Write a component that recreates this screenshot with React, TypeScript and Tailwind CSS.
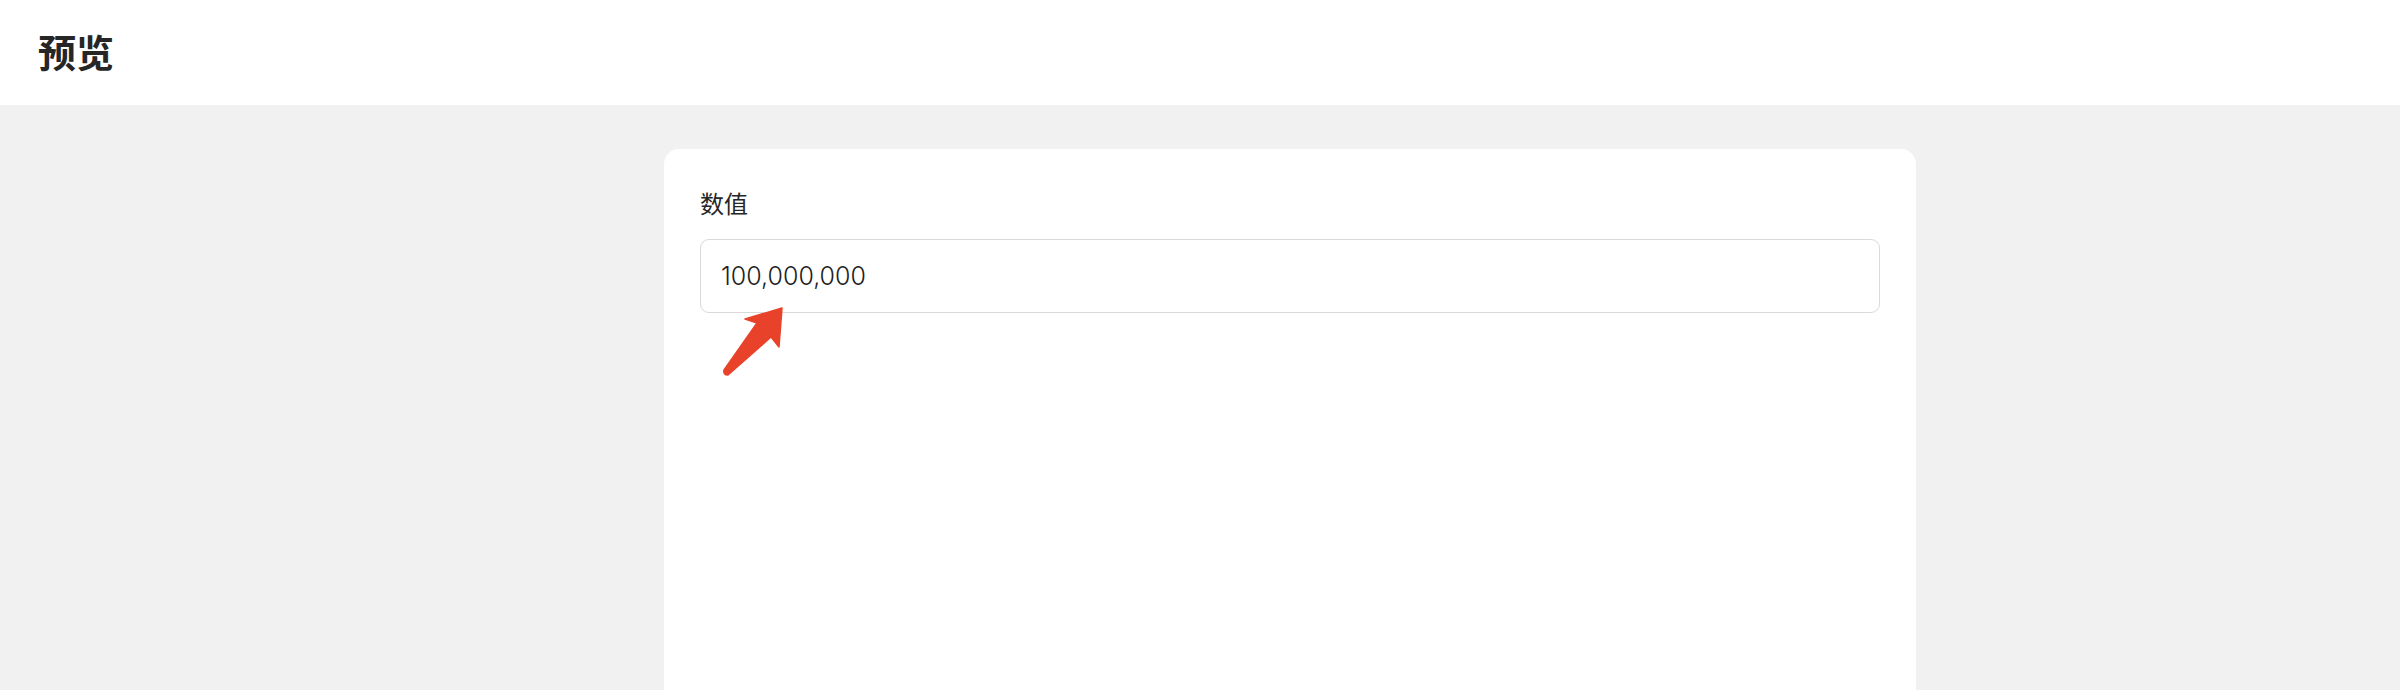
import { useState } from 'react';

const font = { fontFamily: 'Inter, "Noto Sans CJK SC", sans-serif' };

function Arrow() {
  return (
    <svg
      className="absolute left-0 top-0 pointer-events-none"
      width="2400"
      height="690"
      viewBox="0 0 2400 690"
    >
      <path
        d="M782 308 L745 319 L757 323 L724 370 Q723 375 728 375 L771 337 L779 347 Z"
        fill="#e8432a"
        stroke="#e8432a"
        strokeWidth="1.5"
        strokeLinejoin="round"
      />
    </svg>
  );
}

export default function App() {
  const [value, setValue] = useState('100,000,000');

  return (
    <div className="relative flex flex-col h-[690px] bg-[#f1f1f1] overflow-hidden" style={font}>
      <header className="h-[105px] shrink-0 bg-white flex items-center px-[38px]">
        <h1 className="text-[38px] font-bold text-[#262626] leading-none">预览</h1>
      </header>

      <main className="flex-1 flex justify-center pt-[44px] pl-[180px]">
        <div className="w-[1252px] bg-white rounded-t-[15px] p-[36px]">
          <label className="block text-[24px] leading-[39px] text-[#262626]">数值</label>
          <input
            value={value}
            onChange={(e) => setValue(e.target.value)}
            className="mt-[15px] w-full h-[74px] border border-[#d9d9d9] rounded-[9px] px-[20px] text-[25px] font-light text-[#1f1f1f] outline-none"
            style={font}
          />
        </div>
      </main>

      <Arrow />
    </div>
  );
}
